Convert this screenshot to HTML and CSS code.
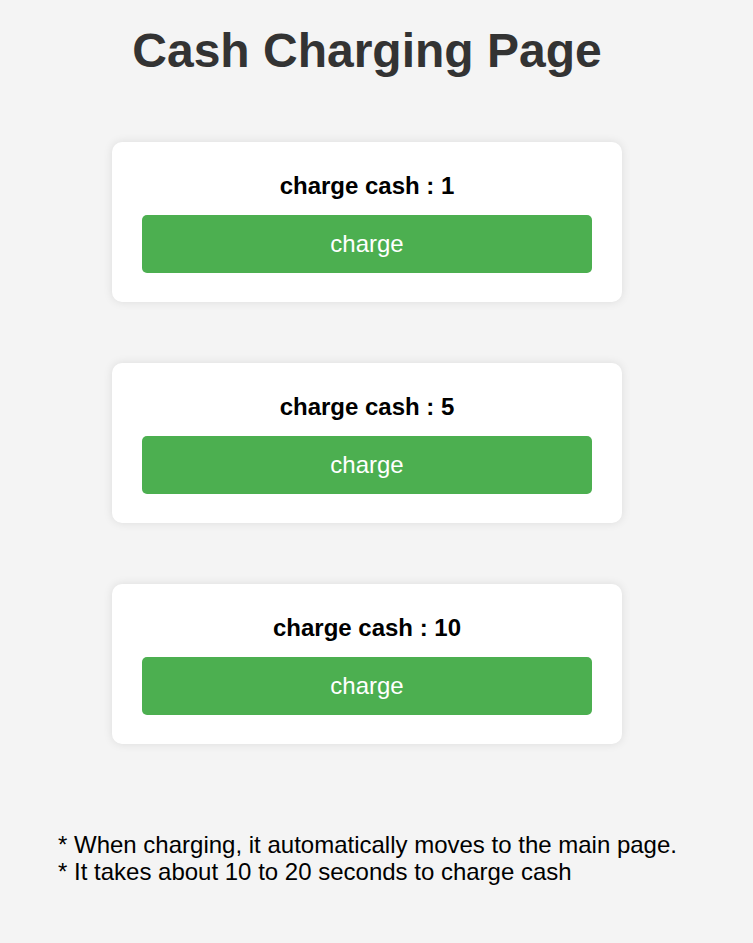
FILE: index.html
```html
<!DOCTYPE html>
<html lang="en">
<head>
    <meta charset="UTF-8">
    <meta name="viewport" content="width=device-width, initial-scale=1.0">
    <title>Cash Charging Page</title>
    <link rel="stylesheet" href="styles.css">
</head>
<body>

    <!-- Header -->
    <h1 class="page-title">Cash Charging Page</h1>

    <!-- Charge options -->
    <section class="charge-list">
        <div class="charge-card">
            <h3>charge cash : 1</h3>
            <button class="charge-btn">charge</button>
        </div>
        <div class="charge-card">
            <h3>charge cash : 5</h3>
            <button class="charge-btn">charge</button>
        </div>
        <div class="charge-card">
            <h3>charge cash : 10</h3>
            <button class="charge-btn">charge</button>
        </div>
    </section>

    <!-- Notes -->
    <div class="notes">
        <p>* When charging, it automatically moves to the main page.</p>
        <p>* It takes about 10 to 20 seconds to charge cash</p>
    </div>

</body>
</html>
```

FILE: styles.css
```css
/* General Styles */
* {
    margin: 0;
    padding: 0;
    box-sizing: border-box;
    font-family: "Liberation Sans", Arial, sans-serif;
}
body {
    background-color: #f4f4f4;
    color: #000;
    padding: 23px 19px 40px 0;
}

/* Header */
.page-title {
    text-align: center;
    font-size: 48px;
    color: #333;
}

/* Cards */
.charge-list {
    display: flex;
    flex-direction: column;
    align-items: center;
    gap: 61px;
    margin-top: 64px;
}
.charge-card {
    background-color: white;
    width: 510px;
    padding: 30px 30px 29px;
    border-radius: 10px;
    box-shadow: 0 0 10px rgba(0, 0, 0, 0.1);
    text-align: center;
}
.charge-card h3 {
    font-size: 24px;
    line-height: 28px;
    margin-bottom: 15px;
}
.charge-btn {
    display: block;
    width: 100%;
    height: 58px;
    background-color: #4CAF50;
    color: white;
    border: none;
    border-radius: 5px;
    font-size: 24px;
    cursor: pointer;
}

/* Notes */
.notes {
    margin: 87px 0 0 58px;
    font-size: 24px;
    line-height: 27px;
}
```
